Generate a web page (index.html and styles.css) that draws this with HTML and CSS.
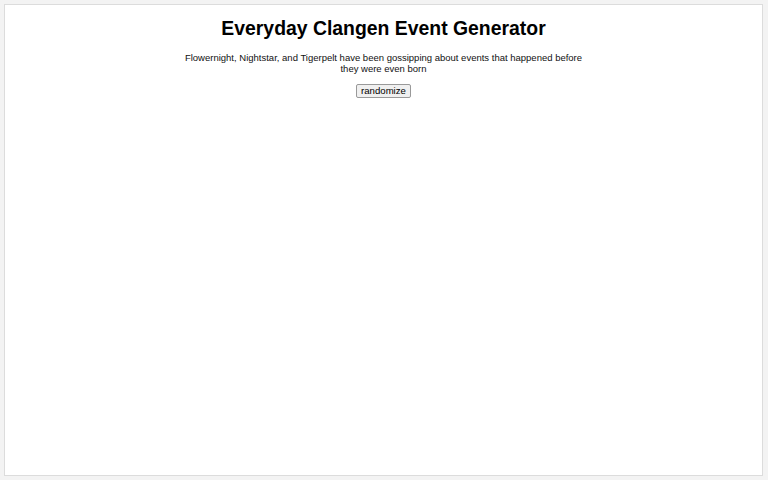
FILE: index.html
```html
<!doctype html>
<html lang="en">
   <head>
      <meta charset="UTF-8" />
      <meta name="viewport" content="width=device-width, initial-scale=1.0" />
      <title>Everyday Clangen Event Generator</title>
      <link rel="stylesheet" href="styles.css">
   </head>
   <body>
      <div class="container">
         <h1>Everyday Clangen Event Generator</h1>
         <p id="event">
            Flowernight, Nightstar, and Tigerpelt have been gossipping about events that happened before they were even born
         </p>
         <button type="button" class="randomize">randomize</button>
      </div>
   </body>
</html>
```

FILE: styles.css
```css
* {
   margin: 0;
   padding: 0;
   box-sizing: border-box;
   font-family: "Liberation Sans", Arial, sans-serif;
}
html,
body {
   height: 100%;
}
body {
   background: #f3f3f3;
   padding: 4px 5px 4px 4px;
}
.container {
   height: 100%;
   background: #fff;
   border: 1px solid #dcdcdc;
   display: flex;
   flex-direction: column;
   align-items: center;
   padding-top: 11px;
   color: #000;
}
h1 {
   font-size: 19.4px;
   font-weight: bold;
   line-height: 24px;
}
#event {
   width: 410px;
   margin-top: 12px;
   font-size: 9.5px;
   line-height: 11px;
   text-align: center;
   color: #111;
}
.randomize {
   margin-top: 10px;
   font-size: 9.6px;
   line-height: 12px;
   padding: 0 4px;
   background: #f0f0f0;
   border: 1px solid #999;
   border-radius: 2px;
   color: #000;
}
```
